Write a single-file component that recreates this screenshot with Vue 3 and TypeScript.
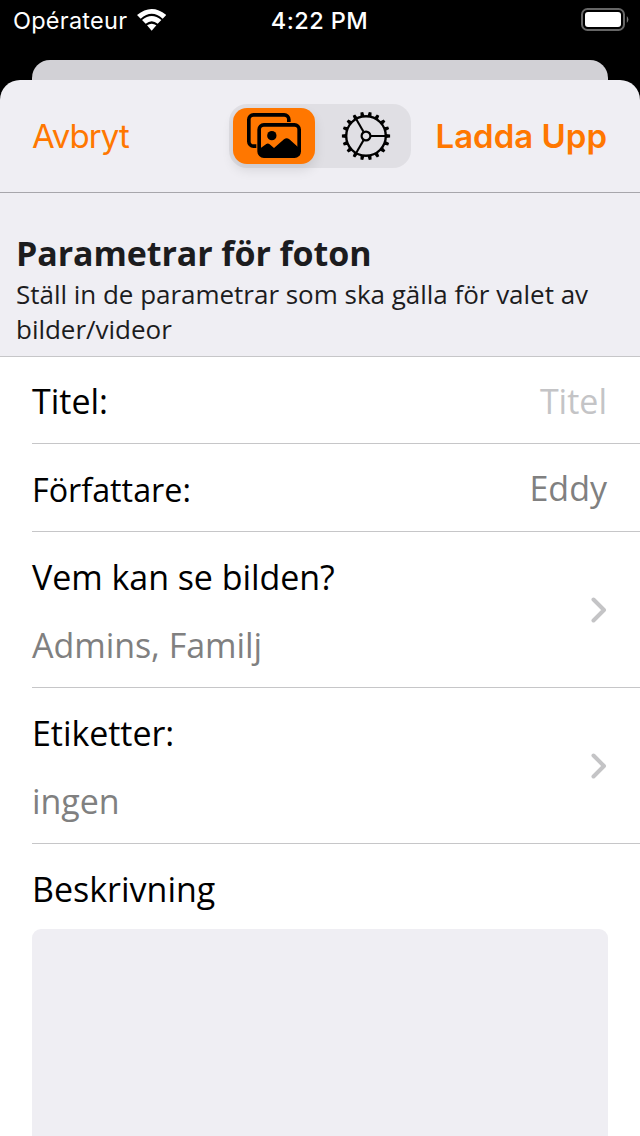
<script setup lang="ts">
interface Field { label: string; value: string; placeholder?: boolean; tight?: boolean }
interface LinkRow { label: string; value: string }

const fields: Field[] = [
  { label: 'Titel:', value: 'Titel', placeholder: true },
  { label: 'Författare:', value: 'Eddy', tight: true },
]
const links: LinkRow[] = [
  { label: 'Vem kan se bilden?', value: 'Admins, Familj' },
  { label: 'Etiketter:', value: 'ingen' },
]
const teeth: number[] = Array.from({ length: 18 }, (_, i) => i * 20)
</script>

<template>
  <div class="screen">
    <header class="status">
      <div class="carrier">
        <span class="carrier-name">Opérateur</span>
        <svg class="wifi" viewBox="0 0 88 66" width="29.4" height="22">
          <path d="M0 18Q44-18 88 18L77 29Q44 0 11 29Z" fill="#fff" />
          <path d="M15 33Q44 9 73 33L62 44Q44 29 26 44Z" fill="#fff" />
          <path d="M30 49Q44 39 58 49L44 65Z" fill="#fff" />
        </svg>
      </div>
      <span class="clock">4:22 PM</span>
      <svg class="battery" viewBox="0 0 48 24" width="48" height="24">
        <rect x="1" y="1" width="42" height="21" rx="5.5" fill="none" stroke="#666" stroke-width="2" />
        <rect x="4" y="4" width="36" height="15" rx="3" fill="#fff" />
        <path d="M45.8 8Q49 11.5 45.8 15Z" fill="#777" />
      </svg>
    </header>
    <div class="behind"></div>
    <main class="sheet">
      <nav class="nav">
        <span class="cancel">Avbryt</span>
        <div class="segments">
          <div class="segment active">
            <svg class="photos" viewBox="81 55 162 135" width="54" height="45">
              <rect x="86.5" y="60.5" width="120" height="94" rx="14" fill="none" stroke="#000" stroke-width="11" />
              <rect x="109" y="82" width="137" height="111" rx="19" fill="#ff7700" />
              <rect x="117.500" y="90.500" width="120" height="94" rx="14" fill="none" stroke="#000" stroke-width="11" />
              <circle cx="155.500" cy="123" r="14" />
              <path d="M119 162L139 148Q144 145 149 149L162 160L192 134Q200 128 208 134L238 161V184H119Z" />
            </svg>
          </div>
          <div class="segment">
            <svg class="gear" viewBox="-25 -25 50 50" width="50" height="50">
              <circle r="19.8" fill="none" stroke="#000" stroke-width="2.4" />
              <path v-for="a in teeth" :key="a" d="M20-2L24.100-1.400V1.400L20 2Z" :transform="`rotate(${a})`" />
              <circle r="4.400" fill="none" stroke="#000" stroke-width="2.2" />
              <path v-for="a in [0, 120, 240]" :key="'s' + a" d="M5 0H20" stroke="#000" stroke-width="2.1" :transform="`rotate(${a})`" />
            </svg>
          </div>
        </div>
        <span class="upload">Ladda Upp</span>
      </nav>
      <section class="intro">
        <h1>Parametrar för foton</h1>
        <p>Ställ in de parametrar som ska gälla för valet av<br />bilder/videor</p>
      </section>
      <section class="form">
        <div v-for="f in fields" :key="f.label" class="row field">
          <span :class="{ tight: f.tight }">{{ f.label }}</span>
          <span class="value" :class="{ placeholder: f.placeholder }">{{ f.value }}</span>
        </div>
        <div v-for="l in links" :key="l.label" class="row link">
          <div class="stack">
            <span>{{ l.label }}</span>
            <span class="value">{{ l.value }}</span>
          </div>
          <svg class="chevron" viewBox="0 0 16 26" width="16" height="26">
            <path d="M2.500 2.500L13 13L2.500 23.500" fill="none" stroke="#c4c4c6" stroke-width="4" stroke-linecap="round" stroke-linejoin="round" />
          </svg>
        </div>
        <div class="description">
          <span>Beskrivning</span>
          <div class="textarea"></div>
        </div>
      </section>
    </main>
  </div>
</template>

<style>
body { background: #000; overflow: hidden; }
</style>

<style scoped>
.screen { width: 640px; height: 1136px; background: #000; overflow: hidden; display: flex; flex-direction: column; font-family: "Open Sans", sans-serif; color: #000; }
.screen * { box-sizing: border-box; }
.screen span, .screen h1, .screen p { white-space: nowrap; }
.status { height: 60px; flex: none; display: grid; grid-template-columns: 1fr auto 1fr; padding: 0 11px 0 13px; font-family: Inter, sans-serif; color: #fff; }
.carrier { display: flex; height: 40px; align-items: center; }
.carrier-name { font-size: 23.500px; letter-spacing: 0.250px; width: 114px; }
.wifi { margin-left: 9.500px; }
.clock { font-size: 23.500px; font-weight: 500; line-height: 41px; letter-spacing: 0.450px; margin-right: 3px; }
.battery { justify-self: end; margin-top: 8px; }
.behind { height: 20px; flex: none; margin: 0 32px; background: #d2d1d6; border-radius: 18px 18px 0 0; }
.sheet { flex: 1; min-height: 0; background: #efeef3; border-radius: 20px 20px 0 0; overflow: hidden; }
.nav { height: 113px; display: grid; grid-template-columns: 196px 182px 196px; justify-content: space-between; align-items: center; padding: 0 33px; border-bottom: 1px solid #a7a6ab; font-family: Inter, sans-serif; color: #ff7700; font-size: 33px; }
.cancel { letter-spacing: -0.900px; margin-left: -1px; }
.upload { justify-self: end; font-weight: 600; }
.segments { height: 64px; display: grid; grid-template-columns: 1fr 1fr; padding: 4px; border-radius: 18px; background: #e0dfe4; }
.segment { display: flex; align-items: center; justify-content: center; }
.active { width: 82px; height: 56px; border-radius: 14px; background: #ff7700; box-shadow: 0 6px 12px rgba(0, 0, 0, 0.1); }
.photos { margin-bottom: 1px; }
.gear { margin-left: 4px; }
.intro { height: 164px; padding: 37px 16px 0; border-bottom: 1px solid #c6c6c8; color: #1c1c1e; }
.intro h1 { margin: 0; font-size: 34px; line-height: 46px; font-weight: 700; letter-spacing: -0.090px; }
.intro p { margin: 1px 0 0; font-size: 26px; line-height: 35px; letter-spacing: -0.020px; }
.form { height: 779px; background: #fff; padding-left: 32px; font-size: 34px; }
.row { display: flex; align-items: center; justify-content: space-between; padding-right: 33px; border-bottom: 1px solid #c6c6c8; }
.field { height: 88px; padding-top: 1px; }
.field:first-child { height: 87px; }
.tight { font-size: 32.300px; padding-top: 1px; }
.link { height: 156px; }
.value { color: #808080; }
.placeholder { color: #c4c4c6; }
.stack { display: flex; flex-direction: column; gap: 22px; line-height: 46px; padding-top: 2px; letter-spacing: -0.050px; }
.description { padding: 22px 32px 0 0; line-height: 46px; }
.textarea { height: 220px; margin-top: 17px; border-radius: 9px; background: #efeef3; }
</style>
